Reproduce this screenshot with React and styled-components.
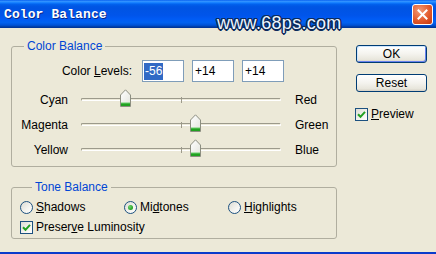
import React from "react";
import styled, { createGlobalStyle } from "styled-components";

const GlobalStyle = createGlobalStyle`
  html, body {
    margin: 0;
    padding: 0;
    background: #ece9d8;
  }
  body {
    font-family: "Liberation Sans", Arial, sans-serif;
    font-size: 12px;
    color: #000;
  }
`;

const Window = styled.div`
  position: relative;
  width: 436px;
  height: 254px;
  box-sizing: border-box;
  background: #ece9d8;
  border-bottom: 2px solid #0a3bcb;
  overflow: hidden;
  display: flex;
  flex-direction: column;
`;

const TitleBar = styled.div`
  flex: none;
  height: 28px;
  display: flex;
  align-items: center;
  justify-content: space-between;
  padding: 0 3px 0 4px;
  background: linear-gradient(
    to bottom,
    #0058ee 0%,
    #3593ff 4%,
    #288eff 7%,
    #127dff 10%,
    #0262ee 15%,
    #0057e5 22%,
    #0054e3 30%,
    #0055eb 56%,
    #005bf5 68%,
    #0262f0 80%,
    #0052d6 90%,
    #0040ab 95%,
    #003092 100%
  );
`;

const Title = styled.span`
  font-family: "Liberation Mono", "Courier New", monospace;
  font-weight: bold;
  font-size: 13px;
  color: #fff;
  text-shadow: 1px 1px 0 #0a2a8a;
  letter-spacing: 0.1px;
`;

const CloseButton = styled.div`
  width: 19px;
  height: 19px;
  border: 1px solid #fff;
  border-radius: 3px;
  background: radial-gradient(circle at 35% 30%, #f29a77 0%, #e35a2c 55%, #c4360f 100%);
  display: flex;
  align-items: center;
  justify-content: center;
`;

const Watermark = styled.div`
  position: absolute;
  left: 217px;
  top: 14px;
  font-family: "Liberation Sans", Arial, sans-serif;
  font-size: 18px;
  line-height: 18px;
  letter-spacing: 0.3px;
  color: #eef6ff;
  text-shadow:
    1.5px 0 0 #0c2b5c,
    -1.5px 0 0 #0c2b5c,
    0 1.5px 0 #0c2b5c,
    0 -1.5px 0 #0c2b5c,
    1px 1px 0 #0c2b5c,
    -1px -1px 0 #0c2b5c,
    1px -1px 0 #0c2b5c,
    -1px 1px 0 #0c2b5c;
`;

const Body = styled.div`
  flex: 1;
  display: flex;
  gap: 19px;
  padding: 11px 0 0 11px;
`;

const LeftColumn = styled.div`
  width: 326px;
  display: flex;
  flex-direction: column;
  gap: ${(p) => p.$gap}px;
`;

const Group = styled.fieldset`
  margin: 0;
  min-width: 0;
  padding: ${(p) => p.$pad};
  border: 1px solid #b0ae9f;
  border-radius: 3px;
`;

const Legend = styled.legend`
  margin-left: 12px;
  padding: 0 3px;
  color: #0046d5;
  font-size: 12px;
  line-height: 14px;
`;

const Mn = styled.span`
  text-decoration: underline;
  text-underline-offset: 1px;
`;

const LevelsRow = styled.div`
  display: flex;
  align-items: center;
  gap: 8px;
  padding-top: 7px;
`;

const LevelsLabel = styled.span`
  width: 120px;
  margin-right: 2px;
  text-align: right;
`;

const LevelInput = styled.div`
  width: 42px;
  height: 22px;
  box-sizing: border-box;
  border: 1px solid #7f9db9;
  background: #fff;
  display: flex;
  align-items: center;
  padding-left: 1px;
  font-size: 12px;
`;

const Selected = styled.span`
  background: ${(p) => (p.$on ? "#316ac5" : "transparent")};
  color: ${(p) => (p.$on ? "#fff" : "#000")};
  padding: 1px 1px;
  line-height: 15px;
`;

const SliderGrid = styled.div`
  margin-top: 5px;
  display: grid;
  grid-template-columns: 56px 200px 1fr;
  grid-auto-rows: 25px;
  column-gap: 13px;
  align-items: center;
`;

const SideLabel = styled.span`
  text-align: ${(p) => (p.$right ? "left" : "right")};
  padding-left: ${(p) => (p.$right ? "1px" : "0")};
`;

const Track = styled.div`
  position: relative;
  height: 1px;
  border: 1px solid;
  border-color: #9c9a8b #fff #fff #9c9a8b;
  border-radius: 2px;

  &::after {
    content: "";
    position: absolute;
    left: 99px;
    top: -2px;
    width: 1px;
    height: 6px;
    background: #9c9a8b;
  }
`;

const Thumb = styled.svg`
  position: absolute;
  top: -10px;
  width: 11px;
  height: 18px;
  z-index: 1;
`;

const RadioRow = styled.div`
  display: grid;
  grid-template-columns: 104px 104px 104px;
  height: 20px;
  align-items: center;
`;

const Option = styled.label`
  display: flex;
  align-items: center;
  gap: 3px;
  height: 20px;
`;

const Radio = styled.span`
  position: relative;
  width: 13px;
  height: 13px;
  box-sizing: border-box;
  border: 1px solid #1c5180;
  border-radius: 50%;
  background: linear-gradient(135deg, #dcdcd4 0%, #f4f4f0 60%, #fff 100%);

  &::after {
    content: "";
    display: ${(p) => (p.$checked ? "block" : "none")};
    position: absolute;
    left: 3px;
    top: 3px;
    width: 5px;
    height: 5px;
    border-radius: 50%;
    background: radial-gradient(circle at 35% 35%, #6fd36f 0%, #21a121 70%);
  }
`;

const Box = styled.span`
  width: 13px;
  height: 13px;
  box-sizing: border-box;
  border: 1px solid #1c5180;
  background: linear-gradient(135deg, #dcdcd4 0%, #f4f4f0 60%, #fff 100%);
  display: flex;
  align-items: center;
  justify-content: center;
`;

const RightColumn = styled.div`
  width: 71px;
  display: flex;
  flex-direction: column;
  padding-top: 6px;
`;

const Button = styled.div`
  height: 18px;
  box-sizing: border-box;
  margin-bottom: 11px;
  border: 1px solid #003c74;
  border-radius: 3px;
  background: linear-gradient(to bottom, #fff 0%, #f4f3ee 50%, #e8e6dc 85%, #d6d0c5 100%);
  box-shadow: ${(p) =>
    p.$default ? "inset 1px 1px 0 #cee7ff, inset -1px -1px 0 #6982ee" : "none"};
  display: flex;
  align-items: center;
  justify-content: center;
  font-size: 12px;
`;

const PreviewRow = styled.label`
  display: flex;
  align-items: center;
  gap: 3px;
  margin: 4px 0 0 -1px;
`;

const Check = () => (
  <Box>
    <svg width="9" height="9" viewBox="0 0 9 9">
      <polyline
        points="1,4.2 3.5,6.8 8,1.8"
        fill="none"
        stroke="#21a121"
        strokeWidth="2"
      />
    </svg>
  </Box>
);

const SliderThumb = ({ value }) => {
  const left = ((value + 100) / 200) * 199 - 5.5;
  return (
    <Thumb viewBox="0 0 11 18" style={{ left: `${left}px` }}>
      <defs>
        <linearGradient id="tg" x1="0" y1="0" x2="1" y2="1">
          <stop offset="0" stopColor="#ffffff" />
          <stop offset="1" stopColor="#e2e4dc" />
        </linearGradient>
      </defs>
      <path
        d="M0.5 6 L5.5 0.8 L10.5 6 V17.5 H0.5 Z"
        fill="url(#tg)"
        stroke="#8c8e80"
        strokeWidth="1"
      />
      <rect x="1" y="14" width="9" height="3" fill="#21a121" />
      <rect x="1" y="13.5" width="9" height="1" fill="#6ccf6c" />
    </Thumb>
  );
};

const sliders = [
  { left: "Cyan", right: "Red", value: -56 },
  { left: "Magenta", right: "Green", value: 14 },
  { left: "Yellow", right: "Blue", value: 14 },
];

const App = () => {
  return (
    <>
      <GlobalStyle />
      <Window>
        <TitleBar>
          <Title>Color Balance</Title>
          <CloseButton>
            <svg width="11" height="11" viewBox="0 0 11 11">
              <path
                d="M1.5 1.5 L9.5 9.5 M9.5 1.5 L1.5 9.5"
                stroke="#fff"
                strokeWidth="2"
                strokeLinecap="square"
              />
            </svg>
          </CloseButton>
        </TitleBar>
        <Watermark>www.68ps.com</Watermark>

        <Body>
          <LeftColumn $gap={13}>
            <Group $pad="0 0 4px 0">
              <Legend>Color Balance</Legend>
              <LevelsRow>
                <LevelsLabel>
                  Color <Mn>L</Mn>evels:
                </LevelsLabel>
                <LevelInput>
                  <Selected $on>-56</Selected>
                </LevelInput>
                <LevelInput>
                  <Selected>+14</Selected>
                </LevelInput>
                <LevelInput>
                  <Selected>+14</Selected>
                </LevelInput>
              </LevelsRow>
              <SliderGrid>
                {sliders.map((s) => (
                  <React.Fragment key={s.left}>
                    <SideLabel>{s.left}</SideLabel>
                    <Track>
                      <SliderThumb value={s.value} />
                    </Track>
                    <SideLabel $right>{s.right}</SideLabel>
                  </React.Fragment>
                ))}
              </SliderGrid>
            </Group>

            <Group $pad="3px 0 1px 8px">
              <Legend>Tone Balance</Legend>
              <RadioRow>
                <Option>
                  <Radio />
                  <span>
                    <Mn>S</Mn>hadows
                  </span>
                </Option>
                <Option>
                  <Radio $checked />
                  <span>
                    Mi<Mn>d</Mn>tones
                  </span>
                </Option>
                <Option>
                  <Radio />
                  <span>
                    <Mn>H</Mn>ighlights
                  </span>
                </Option>
              </RadioRow>
              <Option>
                <Check />
                <span>
                  Preser<Mn>v</Mn>e Luminosity
                </span>
              </Option>
            </Group>
          </LeftColumn>

          <RightColumn>
            <Button $default>OK</Button>
            <Button>Reset</Button>
            <PreviewRow>
              <Check />
              <span>
                <Mn>P</Mn>review
              </span>
            </PreviewRow>
          </RightColumn>
        </Body>
      </Window>
    </>
  );
};

export default App;
